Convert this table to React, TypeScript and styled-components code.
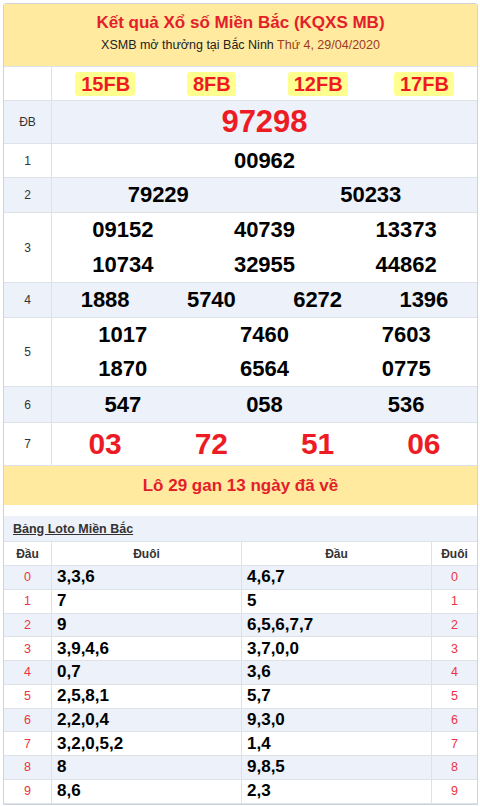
import React from "react";
import styled, { createGlobalStyle } from "styled-components";

const Global = createGlobalStyle`
  html, body { margin: 0; padding: 0; background: #ffffff; }
  body { font-family: "Liberation Sans", Arial, sans-serif; }
  * { box-sizing: border-box; }
`;

const RED = "#ed1c24";
const BLUE = "#edf1f9";
const LINE = "#dde1e8";
const YELLOW = "#ffeaa0";

const Card = styled.div`
  margin: 3px 2px 0 3px;
  border: 1px solid #cfd2d6;
  border-radius: 3px 3px 0 0;
  background: #fff;
  overflow: hidden;
`;

const Header = styled.div`
  height: 63px;
  background: ${YELLOW};
  border-bottom: 1px solid ${LINE};
  display: flex;
  flex-direction: column;
  align-items: center;
  padding-top: 9px;
`;

const Title = styled.h1`
  margin: 0;
  font-size: 17px;
  line-height: 20px;
  font-weight: bold;
  color: #e3202a;
`;

const Sub = styled.div`
  margin-top: 2px;
  font-size: 12.5px;
  line-height: 20px;
  color: #222;
`;

const DateText = styled.span`
  color: #9c3a22;
`;

const Row = styled.div<{ $alt?: boolean }>`
  display: grid;
  grid-template-columns: 48px 1fr;
  background: ${(p) => (p.$alt ? BLUE : "#fff")};
  border-bottom: 1px solid ${LINE};
`;

const Label = styled.div`
  border-right: 1px solid ${LINE};
  display: flex;
  align-items: center;
  justify-content: center;
  font-size: 12px;
  color: #333;
`;

const Cells = styled.div<{ $cols: number }>`
  display: grid;
  grid-template-columns: repeat(${(p) => p.$cols}, 1fr);
`;

const Num = styled.div<{ $size?: number; $red?: boolean; $lh?: number }>`
  text-align: center;
  font-weight: bold;
  font-size: ${(p) => p.$size ?? 22}px;
  line-height: ${(p) => p.$lh ?? 34}px;
  color: ${(p) => (p.$red ? RED : "#000")};
`;

const CodeCell = styled.div`
  display: flex;
  align-items: center;
  justify-content: center;
  height: 33px;
`;

const Code = styled.span`
  background: #ffff8f;
  border-radius: 3px;
  padding: 0 5px 0 6px;
  font-size: 20px;
  font-weight: bold;
  line-height: 24px;
  color: ${RED};
`;

const LoRow = styled.div`
  background: ${YELLOW};
  height: 39px;
  display: flex;
  align-items: center;
  justify-content: center;
  font-size: 17px;
  font-weight: bold;
  color: #e3202a;
`;

const LotoSection = styled.div`
  margin-top: 11px;
`;

const LotoTitle = styled.div`
  background: ${BLUE};
  height: 26px;
  border-bottom: 1px solid ${LINE};
  padding-left: 9px;
  display: flex;
  align-items: center;
  font-size: 12.5px;
  font-weight: bold;
  color: #333;
  text-decoration: underline;
`;

const LotoRow = styled.div<{ $alt?: boolean; $h?: number }>`
  display: grid;
  grid-template-columns: 48px 190px 190px 1fr;
  height: ${(p) => p.$h ?? 23.75}px;
  background: ${(p) => (p.$alt ? BLUE : "#fff")};
  border-bottom: 1px solid ${LINE};
`;

const LCell = styled.div<{ $kind: "head" | "idx" | "val" }>`
  display: flex;
  align-items: center;
  justify-content: ${(p) => (p.$kind === "val" ? "flex-start" : "center")};
  padding-left: ${(p) => (p.$kind === "val" ? "5px" : "0")};
  border-right: 1px solid ${LINE};
  &:last-child { border-right: none; }
  font-size: ${(p) =>
    p.$kind === "val" ? "17px" : p.$kind === "idx" ? "12.5px" : "12px"};
  font-weight: ${(p) => (p.$kind === "idx" ? "normal" : "bold")};
  color: ${(p) =>
    p.$kind === "idx" ? "#ec3442" : p.$kind === "val" ? "#000" : "#333"};
`;

type Prize = { label: string; cols: number; nums: string[]; size?: number; red?: boolean; lh?: number };

const prizes: Prize[] = [
  { label: "ĐB", cols: 1, nums: ["97298"], size: 31, red: true, lh: 42 },
  { label: "1", cols: 1, nums: ["00962"], lh: 33 },
  { label: "2", cols: 2, nums: ["79229", "50233"] },
  { label: "3", cols: 3, nums: ["09152", "40739", "13373", "10734", "32955", "44862"], lh: 34.5 },
  { label: "4", cols: 4, nums: ["1888", "5740", "6272", "1396"] },
  { label: "5", cols: 3, nums: ["1017", "7460", "7603", "1870", "6564", "0775"] },
  { label: "6", cols: 3, nums: ["547", "058", "536"], lh: 35 },
  { label: "7", cols: 4, nums: ["03", "72", "51", "06"], size: 30, red: true, lh: 42 },
];

const loto: [string, string, string][] = [
  ["0", "3,3,6", "4,6,7"],
  ["1", "7", "5"],
  ["2", "9", "6,5,6,7,7"],
  ["3", "3,9,4,6", "3,7,0,0"],
  ["4", "0,7", "3,6"],
  ["5", "2,5,8,1", "5,7"],
  ["6", "2,2,0,4", "9,3,0"],
  ["7", "3,2,0,5,2", "1,4"],
  ["8", "8", "9,8,5"],
  ["9", "8,6", "2,3"],
];

export default function App() {
  return (
    <>
      <Global />
      <Card>
        <Header>
          <Title>Kết quả Xổ số Miền Bắc (KQXS MB)</Title>
          <Sub>
            XSMB mở thưởng tại Bắc Ninh <DateText>Thứ 4, 29/04/2020</DateText>
          </Sub>
        </Header>
        <Row>
          <Label />
          <Cells $cols={4}>
            {["15FB", "8FB", "12FB", "17FB"].map((c) => (
              <CodeCell key={c}>
                <Code>{c}</Code>
              </CodeCell>
            ))}
          </Cells>
        </Row>
        {prizes.map((p, i) => (
          <Row key={p.label} $alt={i % 2 === 0}>
            <Label>{p.label}</Label>
            <Cells $cols={p.cols}>
              {p.nums.map((n, j) => (
                <Num key={j} $size={p.size} $red={p.red} $lh={p.lh}>
                  {n}
                </Num>
              ))}
            </Cells>
          </Row>
        ))}
        <LoRow>Lô 29 gan 13 ngày đã về</LoRow>
        <LotoSection>
          <LotoTitle>Bảng Loto Miền Bắc</LotoTitle>
          <LotoRow $h={24}>
            <LCell $kind="head">Đầu</LCell>
            <LCell $kind="head">Đuôi</LCell>
            <LCell $kind="head">Đầu</LCell>
            <LCell $kind="head">Đuôi</LCell>
          </LotoRow>
          {loto.map(([d, a, b], i) => (
            <LotoRow key={d} $alt={i % 2 === 0}>
              <LCell $kind="idx">{d}</LCell>
              <LCell $kind="val">{a}</LCell>
              <LCell $kind="val">{b}</LCell>
              <LCell $kind="idx">{d}</LCell>
            </LotoRow>
          ))}
        </LotoSection>
      </Card>
    </>
  );
}
